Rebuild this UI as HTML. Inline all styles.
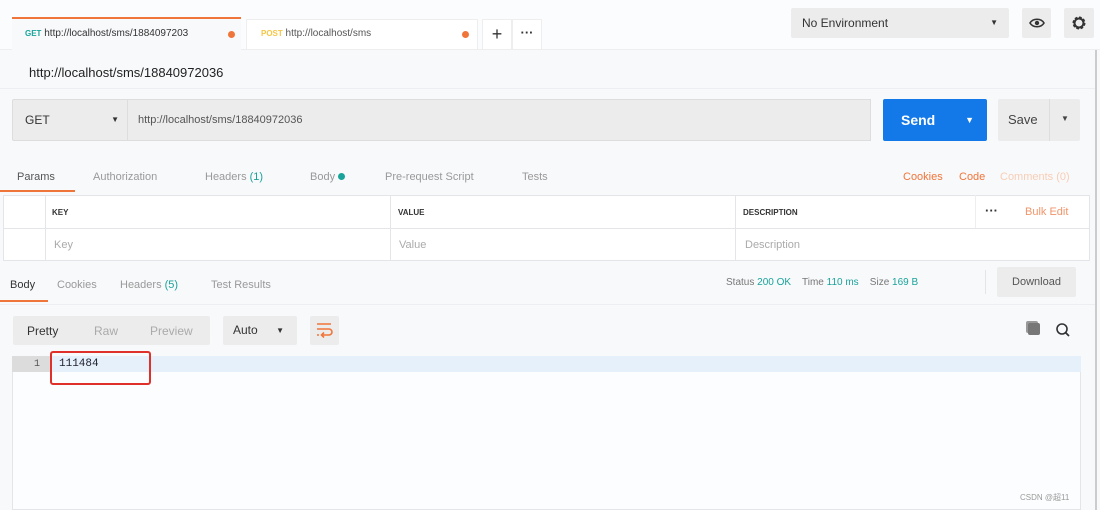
<!DOCTYPE html>
<html><head><meta charset="utf-8"><style>
*{box-sizing:border-box;margin:0;padding:0}
body{width:1100px;height:510px;background:#f8f9fb;font-family:"Liberation Sans",sans-serif;position:relative;overflow:hidden;color:#333}
.a{position:absolute}
.t{font-size:11px;color:#999}
</style></head><body>
<!-- top bar -->
<div class="a" style="left:0;top:0;width:1100px;height:50px;background:#fbfcfd;border-bottom:1px solid #eceef1"></div>
<div class="a" style="left:12px;top:17px;width:229px;height:33px;background:#f8f9fb;border-top:2px solid #f0753a"></div>
<div class="a" style="left:25px;top:28px;font-size:10px;color:#333"><span style="color:#1aa39a;font-size:8px;font-weight:bold">GET</span> http://localhost/sms/1884097203</div>
<div class="a" style="left:228px;top:31px;width:7px;height:7px;border-radius:50%;background:#f0753a"></div>
<div class="a" style="left:246px;top:19px;width:232px;height:31px;background:#fff;border:1px solid #eee"></div>
<div class="a" style="left:261px;top:28px;font-size:10px;color:#555"><span style="color:#f5c645;font-size:8px;font-weight:bold">POST</span> http://localhost/sms</div>
<div class="a" style="left:462px;top:31px;width:7px;height:7px;border-radius:50%;background:#f0753a"></div>
<div class="a" style="left:482px;top:19px;width:30px;height:31px;background:#fff;border:1px solid #eee;text-align:center;font-size:18px;line-height:28px;color:#333">+</div>
<div class="a" style="left:512px;top:19px;width:30px;height:31px;background:#fff;border:1px solid #eee;text-align:center;font-size:13px;line-height:26px;color:#333;font-weight:bold">···</div>
<div class="a" style="left:791px;top:8px;width:218px;height:30px;background:#ececec;border-radius:2px;font-size:12px;line-height:30px;padding-left:11px;color:#333">No Environment<span style="position:absolute;right:11px;font-size:8px">▼</span></div>
<div class="a" style="left:1022px;top:8px;width:29px;height:30px;background:#ececec;border-radius:2px"></div>
<svg class="a" style="left:1029px;top:17px" width="16" height="12" viewBox="0 0 16 12"><path d="M1 6C4 1 12 1 15 6C12 11 4 11 1 6Z" fill="none" stroke="#333" stroke-width="1.6"/><circle cx="8" cy="6" r="2.2" fill="#333"/></svg>
<div class="a" style="left:1064px;top:8px;width:30px;height:30px;background:#ececec;border-radius:2px"></div>
<svg class="a" style="left:1071px;top:15px" width="16" height="16" viewBox="0 0 16 16"><circle cx="8" cy="8" r="5" fill="none" stroke="#333" stroke-width="3" stroke-dasharray="2.4 1.5"/><circle cx="8" cy="8" r="4.5" fill="none" stroke="#333" stroke-width="2"/></svg>
<div class="a" style="left:1095px;top:50px;width:2px;height:460px;background:#ccc"></div>
<!-- title -->
<div class="a" style="left:29px;top:65px;font-size:13px;color:#222">http://localhost/sms/18840972036</div>
<div class="a" style="left:0;top:88px;width:1095px;height:1px;background:#eceef1"></div>
<!-- request row -->
<div class="a" style="left:12px;top:99px;width:116px;height:42px;background:#ececec;border:1px solid #ddd;border-radius:2px 0 0 2px;font-size:12px;line-height:40px;padding-left:12px;color:#333">GET<span style="position:absolute;right:8px;font-size:8px">▼</span></div>
<div class="a" style="left:128px;top:99px;width:743px;height:42px;background:#ececec;border:1px solid #ddd;border-left:none;font-size:11px;line-height:40px;padding-left:10px;color:#555">http://localhost/sms/18840972036</div>
<div class="a" style="left:883px;top:99px;width:104px;height:42px;background:#1479e8;border-radius:2px;color:#fff;font-size:14px;font-weight:bold;line-height:42px;padding-left:18px">Send<span style="position:absolute;right:13px;font-size:9px">▼</span></div>
<div class="a" style="left:998px;top:99px;width:82px;height:42px;background:#ececec;border-radius:2px;font-size:13px;line-height:42px;padding-left:10px;color:#444">Save</div>
<div class="a" style="left:1049px;top:99px;width:1px;height:42px;background:#ddd"></div>
<div class="a" style="left:1061px;top:114px;font-size:8px;color:#444">▼</div>
<!-- params tabs -->
<div class="a" style="left:17px;top:171px;font-size:11px;color:#555">Params</div>
<div class="a" style="left:0;top:190px;width:75px;height:2px;background:#f0753a"></div>
<div class="a t" style="left:93px;top:171px">Authorization</div>
<div class="a t" style="left:205px;top:171px">Headers <span style="color:#1aa39a">(1)</span></div>
<div class="a t" style="left:310px;top:171px">Body <span style="display:inline-block;width:7px;height:7px;border-radius:50%;background:#1aa39a"></span></div>
<div class="a t" style="left:385px;top:171px">Pre-request Script</div>
<div class="a t" style="left:522px;top:171px">Tests</div>
<div class="a" style="left:903px;top:171px;font-size:11px;color:#f0753a">Cookies</div>
<div class="a" style="left:959px;top:171px;font-size:11px;color:#f0753a">Code</div>
<div class="a" style="left:1000px;top:171px;font-size:11px;color:#f8cdb5">Comments (0)</div>
<!-- table -->
<div class="a" style="left:3px;top:195px;width:1087px;height:66px;background:#fff;border:1px solid #e3e5e8"></div>
<div class="a" style="left:3px;top:228px;width:1087px;height:1px;background:#e3e5e8"></div>
<div class="a" style="left:45px;top:195px;width:1px;height:66px;background:#e3e5e8"></div>
<div class="a" style="left:390px;top:195px;width:1px;height:66px;background:#e3e5e8"></div>
<div class="a" style="left:735px;top:195px;width:1px;height:66px;background:#e3e5e8"></div>
<div class="a" style="left:975px;top:195px;width:1px;height:33px;background:#eee"></div>
<div class="a" style="left:52px;top:208px;font-size:8px;font-weight:bold;color:#333">KEY</div>
<div class="a" style="left:398px;top:208px;font-size:8px;font-weight:bold;color:#333">VALUE</div>
<div class="a" style="left:743px;top:208px;font-size:8px;font-weight:bold;color:#333">DESCRIPTION</div>
<div class="a" style="left:985px;top:203px;font-size:13px;font-weight:bold;color:#333">···</div>
<div class="a" style="left:1025px;top:206px;font-size:11px;color:#f0956a">Bulk Edit</div>
<div class="a t" style="left:54px;top:239px;color:#aaa">Key</div>
<div class="a t" style="left:399px;top:239px;color:#aaa">Value</div>
<div class="a t" style="left:745px;top:239px;color:#aaa">Description</div>
<!-- response tabs -->
<div class="a" style="left:10px;top:279px;font-size:11px;color:#333">Body</div>
<div class="a" style="left:0;top:300px;width:48px;height:2px;background:#f0753a"></div>
<div class="a t" style="left:57px;top:279px">Cookies</div>
<div class="a t" style="left:120px;top:279px">Headers <span style="color:#1aa39a">(5)</span></div>
<div class="a t" style="left:211px;top:279px">Test Results</div>
<div class="a" style="left:726px;top:277px;font-size:10px;color:#777">Status <span style="color:#1aa39a">200 OK</span>&nbsp;&nbsp;&nbsp; Time <span style="color:#1aa39a">110 ms</span>&nbsp;&nbsp;&nbsp; Size <span style="color:#1aa39a">169 B</span></div>
<div class="a" style="left:985px;top:270px;width:1px;height:24px;background:#e3e5e8"></div>
<div class="a" style="left:997px;top:267px;width:79px;height:30px;background:#ececec;border-radius:2px;font-size:11px;line-height:30px;text-align:center;color:#555">Download</div>
<div class="a" style="left:0;top:304px;width:1095px;height:1px;background:#eceef1"></div>
<!-- toolbar -->
<div class="a" style="left:13px;top:316px;width:197px;height:29px;background:#ececec;border-radius:2px"></div>
<div class="a" style="left:27px;top:324px;font-size:12px;color:#333">Pretty</div>
<div class="a" style="left:94px;top:324px;font-size:12px;color:#aaa">Raw</div>
<div class="a" style="left:150px;top:324px;font-size:12px;color:#aaa">Preview</div>
<div class="a" style="left:223px;top:316px;width:74px;height:29px;background:#ececec;border-radius:2px;font-size:12px;line-height:29px;padding-left:10px;color:#333">Auto<span style="position:absolute;right:13px;font-size:8px">▼</span></div>
<div class="a" style="left:310px;top:316px;width:29px;height:29px;background:#ececec;border-radius:2px"></div>
<svg class="a" style="left:315px;top:322px" width="19" height="16" viewBox="0 0 19 16"><path d="M2 2H16M2 7H14a3 3 0 0 1 0 6H7M9 10.5L6.5 13L9 15.5M2 13H4" fill="none" stroke="#f0753a" stroke-width="1.6"/></svg>
<div class="a" style="left:1028px;top:323px;width:12px;height:12px;background:#777;border-radius:2px;box-shadow:-2px -2px 0 #999"></div>
<svg class="a" style="left:1055px;top:322px" width="16" height="16" viewBox="0 0 16 16"><circle cx="7" cy="7" r="5" fill="none" stroke="#333" stroke-width="1.6"/><path d="M10.5 10.5L14 14" stroke="#333" stroke-width="1.8"/></svg>
<!-- editor -->
<div class="a" style="left:12px;top:356px;width:1069px;height:154px;background:#fcfdfe;border:1px solid #e3e5e8"></div>
<div class="a" style="left:12px;top:356px;width:1069px;height:16px;background:#e6f0fa"></div>
<div class="a" style="left:12px;top:356px;width:38px;height:16px;background:#dcdcdc"></div>
<div class="a" style="left:34px;top:359px;font-size:10px;color:#555;font-family:'Liberation Mono',monospace">1</div>
<div class="a" style="left:59px;top:358px;font-size:11px;color:#223;font-family:'Liberation Mono',monospace">111484</div>
<div class="a" style="left:50px;top:351px;width:101px;height:34px;border:2px solid #e0302a;border-radius:3px"></div>
<div class="a" style="left:1020px;top:492px;font-size:8px;color:#999">CSDN @超11</div>
</body></html>
